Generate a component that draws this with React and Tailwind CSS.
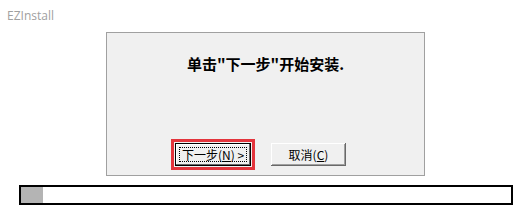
import React from 'react';

const cjk = { fontFamily: '"Noto Sans CJK SC", "Liberation Sans", sans-serif' };

const App = () => {
  return (
    <div className="w-[526px] h-[207px] bg-white overflow-hidden">
      <div
        className="pt-[8px] pl-[7px] text-[12px] leading-[15px] text-[#a0a0a0]"
        style={{ fontFamily: '"Open Sans", "Liberation Sans", sans-serif' }}
      >
        EZInstall
      </div>

      {/* dialog */}
      <div className="mt-[9px] ml-[106px] w-[319px] h-[144px] border border-[#a0a0a0] bg-[#f0f0f0] flex flex-col">
        <div
          className="pt-[21px] text-center text-[15px] leading-[20px] font-bold text-black"
          style={cjk}
        >
          单击"下一步"开始安装.
        </div>

        <div className="mt-auto mb-[5px] ml-[64px] flex items-center gap-[16px]" style={cjk}>
          <div className="border-[3px] border-[#e3343c] p-px">
            <button className="w-[76px] h-[23px] bg-[#f0f0f0] border border-black shadow-[inset_-1px_-1px_0_#696969,inset_1px_1px_0_#fff] flex items-center justify-center p-[3px]">
              <span className="w-full h-full border border-dotted border-black flex items-center justify-center text-[12px] leading-[14px] text-black">
                下一步(<span className="underline">N</span>) &gt;
              </span>
            </button>
          </div>
          <button className="w-[75px] h-[23px] bg-[#f0f0f0] shadow-[inset_-1px_-1px_0_#696969,inset_1px_1px_0_#fff,inset_-2px_-2px_0_#a0a0a0] flex items-center justify-center text-[12px] leading-[14px] text-black">
            取消(<span className="underline">C</span>)
          </button>
        </div>
      </div>

      {/* progress */}
      <div className="mt-[9px] ml-[19px] w-[494px] h-[20px] border-2 border-black bg-white flex">
        <div className="w-[22px] h-full bg-[#b4b4b4]" />
      </div>
    </div>
  );
};

export default App;
